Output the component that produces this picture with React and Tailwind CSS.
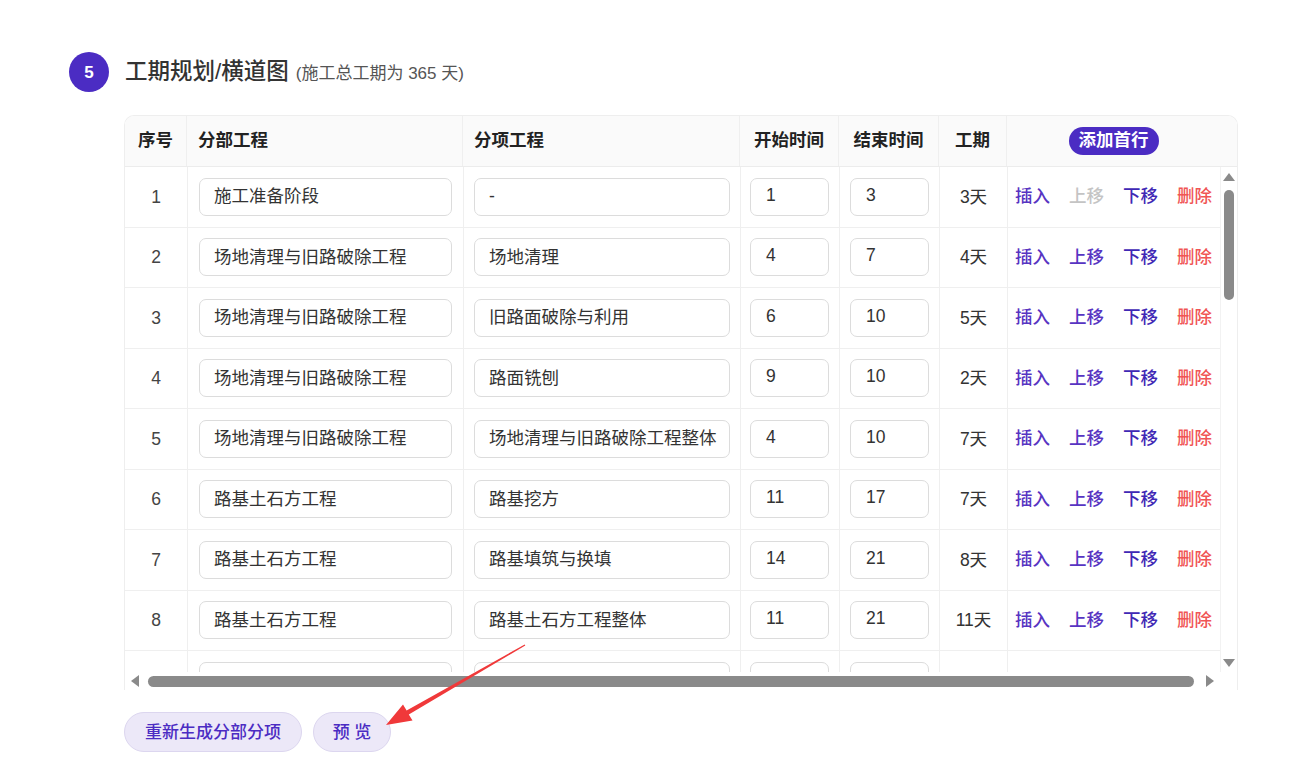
import React from "react";

const rows = [
  { a: "施工准备阶段", b: "-", s: "1", e: "3", d: "3天", first: true },
  { a: "场地清理与旧路破除工程", b: "场地清理", s: "4", e: "7", d: "4天" },
  { a: "场地清理与旧路破除工程", b: "旧路面破除与利用", s: "6", e: "10", d: "5天" },
  { a: "场地清理与旧路破除工程", b: "路面铣刨", s: "9", e: "10", d: "2天" },
  { a: "场地清理与旧路破除工程", b: "场地清理与旧路破除工程整体", s: "4", e: "10", d: "7天" },
  { a: "路基土石方工程", b: "路基挖方", s: "11", e: "17", d: "7天" },
  { a: "路基土石方工程", b: "路基填筑与换填", s: "14", e: "21", d: "8天" },
  { a: "路基土石方工程", b: "路基土石方工程整体", s: "11", e: "21", d: "11天" },
  { a: "", b: "", s: "", e: "", d: "", blank: true },
];

const font = { fontFamily: '"Liberation Sans", "Noto Sans CJK SC", sans-serif' };

const Box = ({ children, className = "" }) => (
  <div
    className={`h-[38px] flex items-center rounded-[7px] border border-[#dcdcdc] bg-white text-[17.5px] text-[#333] leading-none ${className}`}
  >
    {children}
  </div>
);

const Row = ({ r, i }) => (
  <div className="flex h-[60.5px] shrink-0 border-b border-[#efefef] text-[17.5px]">
    <div className="w-[63px] shrink-0 flex items-center justify-center border-r border-[#efefef] text-[#444]">
      {r.blank ? "" : i + 1}
    </div>
    <div className="w-[276px] shrink-0 px-[11px] flex items-center border-r border-[#efefef]">
      <Box className="w-full pl-[14px]">{r.a}</Box>
    </div>
    <div className="w-[277px] shrink-0 px-[10px] flex items-center border-r border-[#efefef]">
      <Box className="w-full pl-[14px]">{r.b}</Box>
    </div>
    <div className="w-[99px] shrink-0 pl-[9px] flex items-center border-r border-[#efefef]">
      <Box className="w-[79px] pl-[15px] pb-[3px]">{r.s}</Box>
    </div>
    <div className="w-[100px] shrink-0 pl-[10px] flex items-center border-r border-[#efefef]">
      <Box className="w-[79px] pl-[15px] pb-[3px]">{r.e}</Box>
    </div>
    <div className="w-[68px] shrink-0 flex items-center justify-center border-r border-[#efefef] text-[#333]">
      {r.d}
    </div>
    {r.blank ? (
      <div className="w-[213px] shrink-0" />
    ) : (
      <div className="w-[213px] shrink-0 pl-[7px] flex items-center gap-[19px] leading-none font-medium">
        <span className="text-[#5734c2]">插入</span>
        <span className={r.first ? "text-[#c4c4c4]" : "text-[#5734c2]"}>上移</span>
        <span className="text-[#3f28b5]">下移</span>
        <span className="text-[#f05555]">删除</span>
      </div>
    )}
  </div>
);

const Tri = ({ dir }) => {
  const pts = {
    up: "0,8 6,0 12,8",
    down: "0,0 6,8 12,0",
    left: "8,0 0,6 8,12",
    right: "0,0 8,6 0,12",
  }[dir];
  const horiz = dir === "left" || dir === "right";
  return (
    <svg width={horiz ? 8 : 12} height={horiz ? 12 : 8} viewBox={horiz ? "0 0 8 12" : "0 0 12 8"}>
      <polygon points={pts} fill="#8a8a8a" />
    </svg>
  );
};

export default function App() {
  return (
    <div className="relative w-full h-[767px] bg-white overflow-hidden" style={font}>
      <div className="pt-[52px] pl-[69px]">
        <div className="flex items-center gap-[16px] h-[40px]">
          <div className="w-[40px] h-[40px] rounded-full bg-[#4b2cc3] text-white flex items-center justify-center text-[17px] font-bold leading-none">
            5
          </div>
          <div className="flex items-baseline gap-[7px] text-[#333] leading-none">
            <span className="text-[22.5px] font-medium">工期规划/横道图</span>
            <span className="text-[17px] text-[#555]">(施工总工期为 365 天)</span>
          </div>
        </div>

        <div className="ml-[55px] mt-[23px] w-[1114px]">
          <div className="rounded-t-[10px] border border-[#eeeeee] border-b-0 overflow-hidden">
            <div className="flex h-[51px] bg-[#fafafa] border-b border-[#ececec] text-[17.5px] font-bold text-[#222] leading-none">
              <div className="w-[62px] shrink-0 flex items-center justify-center border-r border-[#efefef]">序号</div>
              <div className="w-[276px] shrink-0 pl-[11px] flex items-center border-r border-[#efefef]">分部工程</div>
              <div className="w-[277px] shrink-0 pl-[11px] flex items-center border-r border-[#efefef]">分项工程</div>
              <div className="w-[99px] shrink-0 flex items-center justify-center border-r border-[#efefef]">开始时间</div>
              <div className="w-[100px] shrink-0 flex items-center justify-center border-r border-[#efefef]">结束时间</div>
              <div className="w-[68px] shrink-0 flex items-center justify-center border-r border-[#efefef]">工期</div>
              <div className="w-[213px] shrink-0 flex items-center justify-center">
                <span className="h-[28px] px-[10px] rounded-full bg-[#4b2cc3] text-white flex items-center font-semibold">
                  添加首行
                </span>
              </div>
              <div className="flex-1" />
            </div>

            <div className="flex">
              <div className="w-[1095px] h-[505px] overflow-hidden flex flex-col">
                {rows.map((r, i) => (
                  <Row key={i} r={r} i={i} />
                ))}
              </div>
              <div className="flex-1 h-[505px] border-l border-[#f2f2f2] flex flex-col items-center pt-[6px] pb-[5px]">
                <Tri dir="up" />
                <div className="mt-[9px] w-[10px] h-[110px] rounded-full bg-[#8a8a8a]" />
                <div className="flex-1" />
                <Tri dir="down" />
              </div>
            </div>

            <div className="flex h-[18px] items-center">
              <div className="w-[1095px] flex items-center pl-[6px] pr-[6px] gap-[9px]">
                <Tri dir="left" />
                <div className="w-[1046px] h-[11px] rounded-full bg-[#8a8a8a]" />
                <div className="ml-[3px]">
                  <Tri dir="right" />
                </div>
              </div>
              <div className="flex-1" />
            </div>
          </div>

          <div className="mt-[22px] flex gap-[11px] text-[17px] font-medium text-[#4b2cc3] leading-none">
            <button className="h-[40px] px-[20px] rounded-full bg-[#ece8f8] border border-[#dcd6ef]">
              重新生成分部分项
            </button>
            <button className="h-[40px] w-[78px] rounded-full bg-[#ece8f8] border border-[#dcd6ef]">
              预 览
            </button>
          </div>
        </div>
      </div>

      <svg className="absolute inset-0 pointer-events-none" width="1303" height="767" viewBox="0 0 1303 767">
        <polygon
          points="386,725 412.5,720.5 408.8,714.4 525.3,645.5 524.7,644.5 406.6,710.6 403,704.5"
          fill="#f0393a"
        />
      </svg>
    </div>
  );
}
